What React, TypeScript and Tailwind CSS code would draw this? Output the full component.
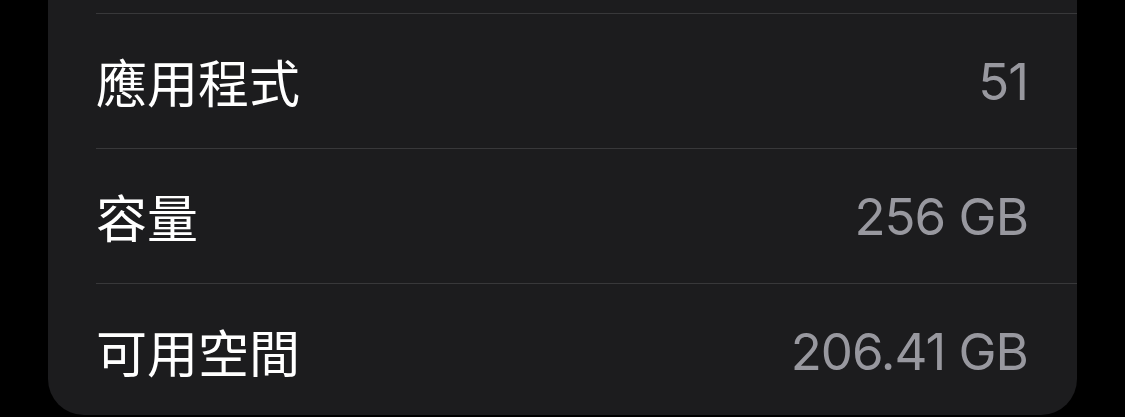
const rows = [
  { label: '應用程式', value: '51' },
  { label: '容量', value: '256 GB' },
  { label: '可用空間', value: '206.41 GB' },
];

export default function App() {
  return (
    <div className="h-[417px] w-[1125px] overflow-hidden bg-black">
      <div className="ml-[48px] w-[1029px] h-[415px] overflow-hidden rounded-b-[36px] bg-[#1c1c1e] pt-[13px]">
        {rows.map((row) => (
          <div
            key={row.label}
            className="ml-[48px] flex h-[135px] items-center justify-between border-t border-[#38383a] pr-[49px]"
          >
            <span className="text-[51px] leading-none text-white [font-family:'Noto_Sans_CJK_TC','Noto_Sans',sans-serif]">
              {row.label}
            </span>
            <span className="text-[51px] leading-none tracking-[-1px] text-[#98989f] [font-family:Inter,'Noto_Sans',sans-serif]">
              {row.value}
            </span>
          </div>
        ))}
      </div>
    </div>
  );
}
